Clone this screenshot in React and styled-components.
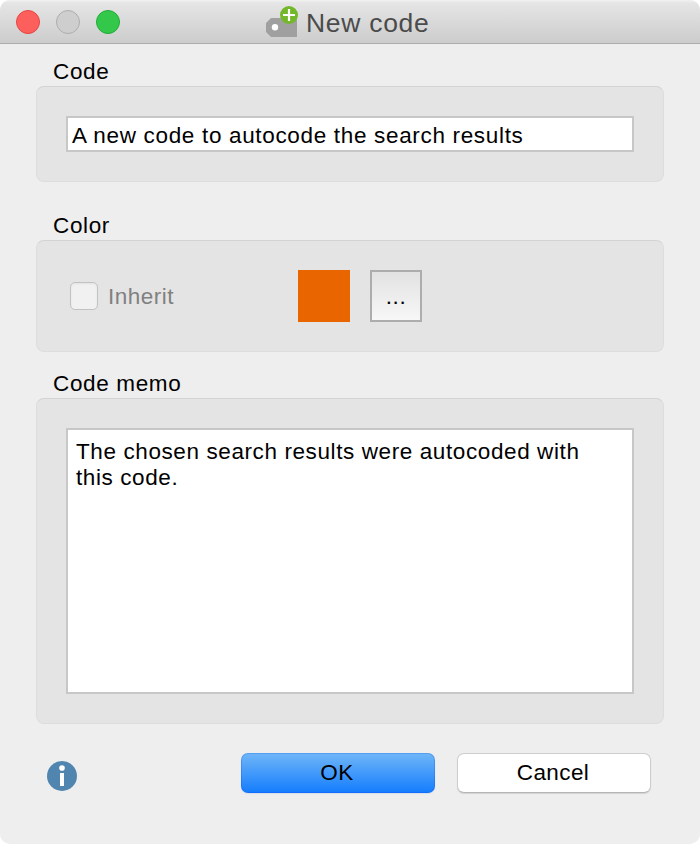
import React, { Component } from 'react'
import styled, { createGlobalStyle } from 'styled-components'


const GlobalStyle = createGlobalStyle`
body {
  margin: 0;
  background: #fff;
}
* {
  box-sizing: border-box;
}
`;
const Dialog = styled.div`
display: flex;
flex-direction: column;
width: 700px;
height: 844px;
background: #eeeeee;
border-radius: 10px;
overflow: hidden;
color: #000;
font-family: "Liberation Sans", Arial, sans-serif;
font-size: 22.5px;
line-height: 26px;
`;
const TitleBar = styled.header`
display: grid;
grid-template-columns: 250px 1fr 250px;
align-items: center;
height: 44px;
background: linear-gradient(#f2f2f2 0, #e5e5e5 3px, #cdcdcd 42px);
border-bottom: 1px solid #acacac;
`;
const Lights = styled.div`
display: flex;
gap: 16px;
padding-left: 16px;
`;
const Light = styled.span`
width: 24px;
height: 24px;
border-radius: 50%;
background: ${props => props.$fill};
border: 1px solid ${props => props.$edge};
`;
const Title = styled.h1`
display: flex;
align-self: start;
align-items: center;
margin: 0;
padding: 5px 0 0 16px;
color: #4b4b4b;
font-size: 26.5px;
font-weight: normal;
letter-spacing: 0.7px;
white-space: nowrap;
`;
const TitleText = styled.span`
padding-top: 4px;
`;
const TagIcon = styled.svg`
flex: none;
width: 32px;
height: 32px;
margin-right: 8px;
`;
const Content = styled.main`
padding: 14px 36px 0;
`;
const Section = styled.section`
margin-bottom: ${props => props.$gap}px;
`;
const Label = styled.h2`
margin: 0;
padding: 1px 0 1px 17px;
font-size: inherit;
font-weight: normal;
letter-spacing: 0.65px;
`;
const Group = styled.div`
display: flex;
align-items: center;
height: ${props => props.$height}px;
padding: 0 29px;
background: #e4e4e4;
border: 1px solid #dddddd;
border-top-color: #d3d3d3;
border-radius: 8px;
`;
const Field = styled.div`
width: 568px;
height: ${props => props.$height}px;
padding: ${props => props.$multiline ? '9px 24px 9px 8px' : '5px 4px 1px'};
background: #fff;
border: 2px solid #c7c7c7;
letter-spacing: ${props => props.$spacing}px;
`;
const Check = styled.label`
display: flex;
align-items: center;
gap: 10px;
width: 228px;
margin-left: 4px;
color: #808080;
letter-spacing: 0.5px;
`;
const CheckText = styled.span`
padding-top: 2px;
`;
const Box = styled.span`
width: 28px;
height: 28px;
background: #f1f1f1;
border: 1px solid #c2c2c2;
border-radius: 5px;
box-shadow: inset 0 1px 2px #e2e2e2;
`;
const Swatch = styled.span`
width: 52px;
height: 52px;
background: #e86500;
`;
const MoreButton = styled.button`
width: 52px;
height: 52px;
margin-left: 20px;
padding: 2px 0 0;
border: 2px solid #adadad;
background: linear-gradient(#e2e2e2, #f7f7f7);
color: #000;
font: inherit;
letter-spacing: 0.6px;
`;
const Footer = styled.footer`
display: flex;
align-items: center;
padding: 29px 49px 0 46px;
`;
const InfoIcon = styled.svg`
width: 32px;
height: 32px;
margin: 5px auto 0 0;
`;
const Button = styled.button`
width: 194px;
height: 40px;
margin-left: 22px;
padding: 0 2px 0 0;
border: 1px solid ${props => props.$primary ? 'transparent' : '#cdcdcd'};
border-bottom-color: ${props => props.$primary ? 'transparent' : '#b5b5b5'};
border-radius: 7px;
background: ${props => props.$primary ? 'linear-gradient(#6eb5f8, #167efd) padding-box, linear-gradient(#559fef, #126efb) border-box' : '#fff'};
box-shadow: 0 1px 1px ${props => props.$primary ? '#d8dde8' : '#d2d2d2'};
color: #000;
font: inherit;
letter-spacing: 0.4px;
`;

class App extends Component {
    render () {
        return (
            <>
                <GlobalStyle />
                <Dialog>
                    <TitleBar>
                        <Lights>
                            <Light $fill="#fd605c" $edge="#e64543" />
                            <Light $fill="#cecece" $edge="#adadad" />
                            <Light $fill="#34c84a" $edge="#20ac36" />
                        </Lights>
                        <Title>
                            <TagIcon viewBox="0 0 32 32">
                                <path d="M5 13h26v19H5l-5-5v-9z" fill="#a0a0a0" />
                                <circle cx="9" cy="22.3" r="3.2" fill="#fff" />
                                <circle cx="23" cy="10" r="9" fill="#73b72b" />
                                <path d="M23 4v12M17 10h12" stroke="#fff" strokeWidth="2.2" />
                            </TagIcon>
                            <TitleText>New code</TitleText>
                        </Title>
                    </TitleBar>
                    <Content>
                        <Section $gap={30}>
                            <Label>Code</Label>
                            <Group $height={96}>
                                <Field $height={36} $spacing={0.67}>A new code to autocode the search results</Field>
                            </Group>
                        </Section>
                        <Section $gap={18}>
                            <Label>Color</Label>
                            <Group $height={112}>
                                <Check><Box /><CheckText>Inherit</CheckText></Check>
                                <Swatch />
                                <MoreButton>...</MoreButton>
                            </Group>
                        </Section>
                        <Section $gap={0}>
                            <Label>Code memo</Label>
                            <Group $height={326}>
                                <Field $height={266} $spacing={0.6} $multiline>
                                    The chosen search results were autocoded with this code.
                                </Field>
                            </Group>
                        </Section>
                    </Content>
                    <Footer>
                        <InfoIcon viewBox="0 0 32 32">
                            <circle cx="16" cy="16" r="15" fill="#5085b0" />
                            <circle cx="16" cy="8" r="2.8" fill="#fff" />
                            <path d="M14 13h4v13h-4z" fill="#fff" />
                        </InfoIcon>
                        <Button $primary>OK</Button>
                        <Button>Cancel</Button>
                    </Footer>
                </Dialog>
            </>
        )
    }
}

export default App
